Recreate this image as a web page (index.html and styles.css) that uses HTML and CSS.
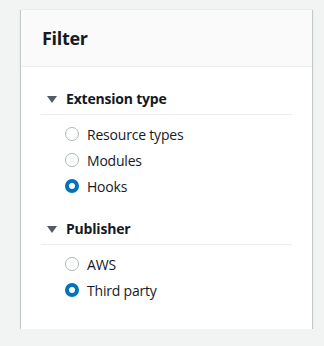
FILE: index.html
```html
<!DOCTYPE html>
<html lang="en">
<head>
<meta charset="utf-8">
<title>Filter</title>
<link rel="stylesheet" href="styles.css">
</head>
<body>
<div class="card">
  <div class="card-header"><h2 class="card-title">Filter</h2></div>
  <div class="card-body">
    <section class="group">
      <div class="group-title"><span class="caret"></span><span>Extension type</span></div>
      <div class="options">
        <label class="option"><span class="radio"></span><span>Resource types</span></label>
        <label class="option"><span class="radio"></span><span>Modules</span></label>
        <label class="option"><span class="radio checked"></span><span>Hooks</span></label>
      </div>
    </section>
    <section class="group">
      <div class="group-title"><span class="caret"></span><span>Publisher</span></div>
      <div class="options">
        <label class="option"><span class="radio"></span><span>AWS</span></label>
        <label class="option"><span class="radio checked"></span><span>Third party</span></label>
      </div>
    </section>
  </div>
</div>
</body>
</html>
```
FILE: styles.css
```css
* { box-sizing: border-box; }
html, body { margin: 0; }
body {
  background: #f2f3f3;
  padding: 9px 0 0 21px;
  font-family: "Open Sans", "Noto Sans", sans-serif;
  color: #16191f;
  font-size: 14px;
  letter-spacing: -0.2px;
}
.card {
  width: 291px;
  background: #fff;
  box-shadow: 0 1px 1px 0 rgba(0,28,36,0.3), 1px 1px 1px 0 rgba(0,28,36,0.15), -1px 1px 1px 0 rgba(0,28,36,0.15);
  border-top: 1px solid #eaeded;
}
.card-header {
  height: 57px;
  background: #fafafa;
  border-bottom: 1px solid #eaeded;
  padding: 0 21px;
  display: flex;
  align-items: center;
}
.card-title {
  margin: 0;
  font-size: 18px;
  line-height: 22px;
  font-weight: 700;
  letter-spacing: -0.3px;
}
.card-body {
  padding: 21px 20px 26px;
  display: flex;
  flex-direction: column;
  gap: 19px;
}
.group-title {
  display: flex;
  align-items: center;
  gap: 9px;
  padding: 0 0 4px 6px;
  border-bottom: 1px solid #eaeded;
  font-weight: 700;
  line-height: 22px;
}
.caret {
  width: 0;
  height: 0;
  border-left: 5px solid transparent;
  border-right: 5px solid transparent;
  border-top: 7px solid #545b64;
}
.options {
  padding: 6px 0 0 24px;
}
.option {
  display: flex;
  align-items: center;
  gap: 8px;
  height: 26px;
}
.radio {
  width: 14px;
  height: 14px;
  border-radius: 50%;
  border: 1.5px solid #aab7b8;
  background: #fff;
}
.radio.checked {
  border: 4px solid #0073bb;
}
```
